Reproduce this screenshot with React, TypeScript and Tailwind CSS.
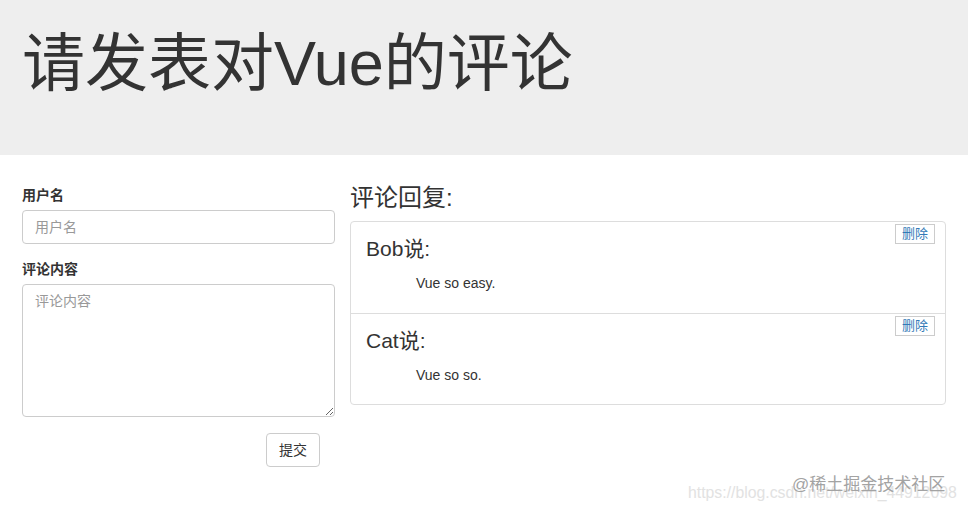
import React from 'react';

const FONT = '"Liberation Sans", "Noto Sans CJK SC", sans-serif';

const comments = [
  { user: 'Bob', content: 'Vue so easy.' },
  { user: 'Cat', content: 'Vue so so.' },
];

export default function App() {
  return (
    <div
      className="relative min-h-[511px] w-[968px] bg-white text-[#333] text-[14px]"
      style={{ fontFamily: FONT }}
    >
      {/* Jumbotron */}
      <div className="h-[155px] bg-[#eeeeee] px-[22px] pt-[29px]">
        <h1 className="text-[63px] leading-[1.1] font-normal text-[#333]">
          请发表对Vue的评论
        </h1>
      </div>

      <div className="flex gap-[15px] px-[22px] pt-[27px]">
        {/* Form */}
        <div className="w-[313px] shrink-0">
          <label className="block text-[14px] font-bold leading-[26px]">用户名</label>
          <input
            className="mt-[2px] block h-[34px] w-full rounded-[4px] border border-[#ccc] px-[12px] text-[14px] outline-none placeholder:text-[#999]"
            placeholder="用户名"
          />
          <label className="mt-[12px] block text-[14px] font-bold leading-[26px]">评论内容</label>
          <textarea
            className="mt-[2px] block h-[133px] w-full rounded-[4px] border border-[#ccc] px-[12px] py-[6px] text-[14px] outline-none placeholder:text-[#999]"
            placeholder="评论内容"
          />
          <div className="mt-[16px] flex justify-end pr-[15px]">
            <button className="h-[34px] rounded-[4px] border border-[#ccc] bg-white px-[12px] text-[14px] text-[#333]">
              提交
            </button>
          </div>
        </div>

        {/* Comment list */}
        <div className="flex-1">
          <h3 className="mt-[1px] text-[24px] leading-[30px] font-normal">评论回复:</h3>
          <ul className="mt-[8px] rounded-[4px] border border-[#ddd]">
            {comments.map((c, i) => (
              <li
                key={c.user}
                className={
                  i === 0
                    ? 'h-[91px] px-[15px] pt-[2px]'
                    : 'h-[91px] border-t border-[#ddd] px-[15px] pt-[2px]'
                }
              >
                <button className="float-right mr-[-5px] h-[20px] border border-[#ccc] bg-white px-[6px] text-[13px] leading-[18px] text-[#337ab7]">
                  删除
                </button>
                <h4 className="pt-[13px] text-[21px] leading-[24px] font-normal">{c.user}说:</h4>
                <p className="mt-[12px] pl-[50px] text-[14px] leading-[20px]">{c.content}</p>
              </li>
            ))}
          </ul>
        </div>
      </div>

      {/* Watermark */}
      <div className="pointer-events-none absolute left-[688px] top-[483px] text-[15.8px] leading-[20px] text-[#e2e2e2]">
        https://blog.csdn.net/weixin_44912098
      </div>
      <div className="pointer-events-none absolute left-[792px] top-[474px] text-[17px] leading-[22px] text-[#a3a3a3]">
        @稀土掘金技术社区
      </div>
    </div>
  );
}
